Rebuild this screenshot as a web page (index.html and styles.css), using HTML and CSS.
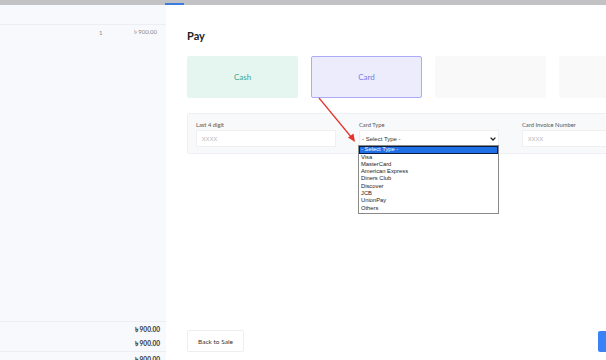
FILE: index.html
```html
<!DOCTYPE html>
<html lang="en">
<head>
    <meta charset="UTF-8">
    <meta name="viewport" content="width=device-width, initial-scale=1.0">
    <title>Pay</title>
    <link rel="stylesheet" href="styles.css">
</head>
<body>
    <div class="topbar"><span class="tab-marker"></span></div>

    <div class="layout">
        <aside class="cart">
            <div class="cart-head"></div>
            <div class="cart-row">
                <span class="qty">1</span>
                <span class="price">৳ 900.00</span>
            </div>
            <div class="cart-summary">
                <div class="sum-line">৳ 900.00</div>
                <div class="sum-line">৳ 900.00</div>
                <div class="sum-line total">৳ 900.00</div>
            </div>
        </aside>

        <main class="pay">
            <h1>Pay</h1>

            <div class="methods">
                <div class="method cash">Cash</div>
                <div class="method card">Card</div>
                <div class="method empty"></div>
                <div class="method empty"></div>
            </div>

            <div class="card-form">
                <div class="field">
                    <label>Last 4 digit</label>
                    <div class="input placeholder">XXXX</div>
                </div>
                <div class="field">
                    <label>Card Type</label>
                    <div class="input select">
                        <span>- Select Type -</span>
                        <svg class="chevron" width="6" height="4" viewBox="0 0 6 4"><path d="M0.6 0.6 L3 3 L5.4 0.6" fill="none" stroke="#222" stroke-width="1.3"/></svg>
                    </div>
                    <ul class="options">
                        <li class="active">- Select Type -</li>
                        <li>Visa</li>
                        <li>MasterCard</li>
                        <li>American Express</li>
                        <li>Diners Club</li>
                        <li>Discover</li>
                        <li>JCB</li>
                        <li>UnionPay</li>
                        <li>Others</li>
                    </ul>
                </div>
                <div class="field">
                    <label>Card Invoice Number</label>
                    <div class="input placeholder">XXXX</div>
                </div>
            </div>

            <div class="footer">
                <button class="back">Back to Sale</button>
                <button class="confirm"></button>
            </div>
        </main>
    </div>

    <!-- annotation arrow -->
    <svg class="annotation" width="606" height="360" viewBox="0 0 606 360">
        <line x1="319" y1="98" x2="352" y2="138" stroke="#e8322c" stroke-width="1.2"/>
        <path d="M355 142 L348 137.5 L353.5 133.5 Z" fill="#e8322c"/>
    </svg>
</body>
</html>
```

FILE: styles.css
```css
* {
    box-sizing: border-box;
}
body {
    margin: 0;
    width: 606px;
    height: 360px;
    overflow: hidden;
    font-family: Lato, "Open Sans", Arial, sans-serif;
    color: #333;
    background: #fff;
    position: relative;
}
.topbar {
    height: 5px;
    background: #c2c2c4;
    position: relative;
}
.tab-marker {
    display: block;
    margin-left: 165px;
    width: 19px;
    height: 2px;
    position: relative;
    top: 3px;
    background: #3c7ce0;
}
.layout {
    display: flex;
    height: 355px;
}
.cart {
    width: 166px;
    flex-shrink: 0;
    background: #f8f9fc;
    display: flex;
    flex-direction: column;
}
.cart-head {
    height: 20px;
    border-bottom: 1px solid #eceef3;
}
.cart-row {
    display: flex;
    align-items: center;
    height: 15px;
    font-size: 6px;
    color: #888;
}
.qty {
    margin-left: 99px;
}
.price {
    margin-left: auto;
    margin-right: 9px;
}
.cart-summary {
    margin-top: auto;
    height: 39px;
    overflow: hidden;
    border-top: 1px solid #eceef3;
    padding-top: 1px;
}
.sum-line {
    height: 14px;
    line-height: 14px;
    text-align: right;
    padding-right: 6px;
    font-size: 6.5px;
    font-weight: 700;
    color: #333;
}
.sum-line.total {
    border-top: 1px solid #eceef3;
    height: 16px;
    line-height: 15px;
}
.pay {
    flex: 1;
    padding: 0 0 0 21px;
    display: flex;
    flex-direction: column;
    overflow: hidden;
}
h1 {
    margin: 24px 0 0;
    font-size: 11px;
    font-weight: 700;
    color: #222;
    height: 27px;
    line-height: 14px;
}
.methods {
    display: flex;
    gap: 13px;
}
.method {
    flex: 0 0 111px;
    height: 42px;
    border-radius: 2px;
    display: flex;
    align-items: center;
    justify-content: center;
    font-size: 8px;
}
.cash {
    background: #e5f6f0;
    color: #3fa587;
}
.card {
    background: #ececfc;
    border: 1px solid #aaaaf6;
    color: #7a7ae6;
}
.empty {
    background: #f9f9f9;
}
.card-form {
    margin-top: 15px;
    height: 41px;
    width: 440px;
    flex-shrink: 0;
    background: #f8f9fb;
    border: 1px solid #eef0f4;
    border-radius: 2px;
    display: flex;
    gap: 23px;
    padding: 7px 0 0 8px;
}
.field {
    width: 140px;
    flex-shrink: 0;
    position: relative;
}
.field label {
    display: block;
    font-size: 5.8px;
    color: #555;
    height: 9px;
    line-height: 8px;
}
.input {
    height: 17px;
    background: #fff;
    border: 1px solid #f0f0f0;
    font-size: 5.5px;
    display: flex;
    align-items: center;
    padding-left: 5px;
}
.placeholder {
    color: #b8b8b8;
    letter-spacing: 0.3px;
}
.select {
    font-family: "Liberation Sans", Arial, sans-serif;
    font-size: 6px;
    color: #333;
    padding-left: 2px;
    padding-right: 2px;
    justify-content: space-between;
}
.options {
    position: absolute;
    left: -1px;
    top: 24px;
    width: 141px;
    margin: 0;
    padding: 0 0 1px;
    list-style: none;
    background: #fff;
    border: 1px solid #8a8a8a;
    font-family: "Liberation Sans", Arial, sans-serif;
    font-size: 5.8px;
    color: #222;
    z-index: 2;
}
.options li {
    height: 7.3px;
    line-height: 7.3px;
    padding-left: 2px;
}
.options li.active {
    background: #1f6fe6;
    color: #fff;
    outline: 1px solid #0c1c40;
    outline-offset: -1px;
    height: 7.5px;
    line-height: 7.5px;
}
.footer {
    margin-top: auto;
    margin-bottom: 8px;
    display: flex;
    align-items: center;
    justify-content: space-between;
}
button {
    font-family: inherit;
    cursor: pointer;
}
.back {
    width: 57px;
    height: 22px;
    background: #fff;
    border: 1px solid #eeeeee;
    border-radius: 2px;
    font-size: 6.5px;
    color: #333;
    padding: 0;
}
.confirm {
    width: 30px;
    height: 21px;
    margin-right: -22px;
    border: none;
    border-radius: 2px;
    background: #3b82f6;
}
.annotation {
    position: absolute;
    left: 0;
    top: 0;
    pointer-events: none;
}
```
